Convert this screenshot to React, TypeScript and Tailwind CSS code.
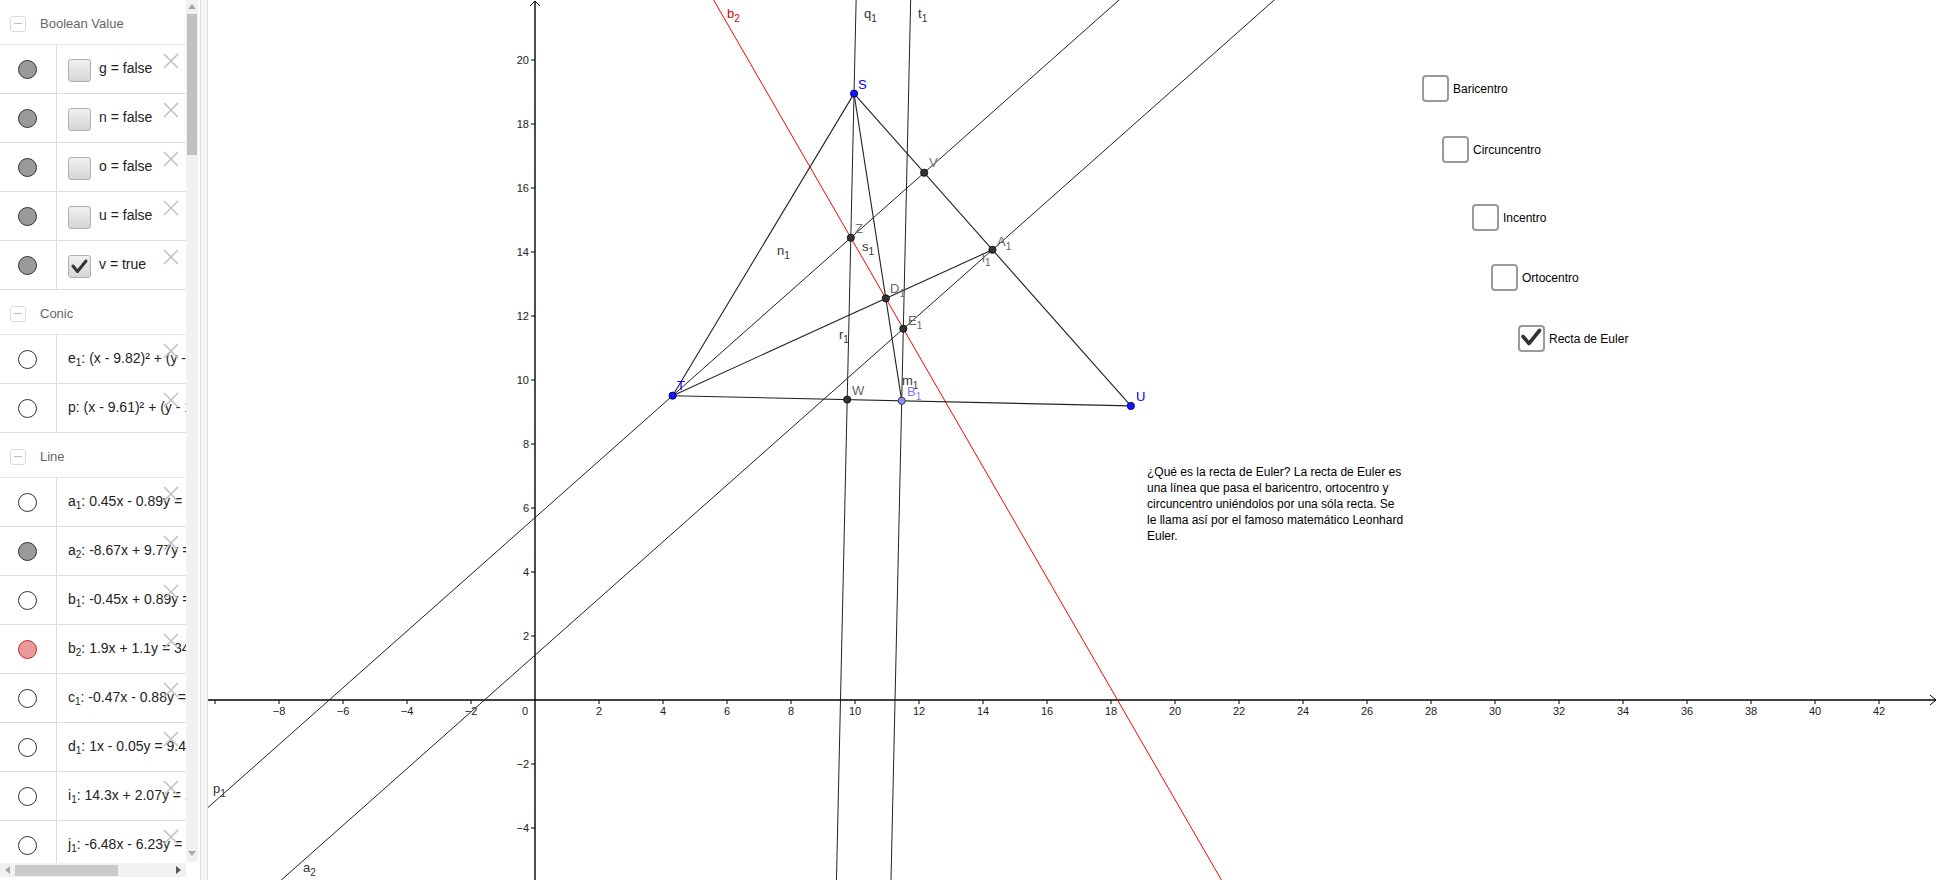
import React from 'react';

type P = [number, number];

// graphics view: origin in page pixels, 32px per unit
const OX = 535;
const OY = 700;
const K = 32;
const X = (x: number) => OX + K * x;
const Y = (y: number) => OY - K * y;

const S: P = [9.97, 18.95];
const T: P = [4.3, 9.51];
const U: P = [18.62, 9.19];

const mid = (a: P, b: P): P => [(a[0] + b[0]) / 2, (a[1] + b[1]) / 2];
const foot = (p: P, a: P, b: P): P => {
  const dx = b[0] - a[0];
  const dy = b[1] - a[1];
  const t = ((p[0] - a[0]) * dx + (p[1] - a[1]) * dy) / (dx * dx + dy * dy);
  return [a[0] + t * dx, a[1] + t * dy];
};
const circum = (a: P, b: P, c: P): P => {
  const d = 2 * (a[0] * (b[1] - c[1]) + b[0] * (c[1] - a[1]) + c[0] * (a[1] - b[1]));
  const a2 = a[0] ** 2 + a[1] ** 2;
  const b2 = b[0] ** 2 + b[1] ** 2;
  const c2 = c[0] ** 2 + c[1] ** 2;
  return [
    (a2 * (b[1] - c[1]) + b2 * (c[1] - a[1]) + c2 * (a[1] - b[1])) / d,
    (a2 * (c[0] - b[0]) + b2 * (a[0] - c[0]) + c2 * (b[0] - a[0])) / d,
  ];
};

const A1 = mid(S, U);
const B1 = mid(T, U);
const D1: P = [(S[0] + T[0] + U[0]) / 3, (S[1] + T[1] + U[1]) / 3];
const E1 = circum(S, T, U);
const Z: P = [S[0] + T[0] + U[0] - 2 * E1[0], S[1] + T[1] + U[1] - 2 * E1[1]];
const V = foot(T, S, U);
const W = foot(S, T, U);

function InfLine({ a, b, color = '#222' }: { a: P; b: P; color?: string }) {
  const x1 = X(a[0]);
  const y1 = Y(a[1]);
  const dx = X(b[0]) - x1;
  const dy = Y(b[1]) - y1;
  const len = Math.hypot(dx, dy);
  const ux = (dx / len) * 3000;
  const uy = (dy / len) * 3000;
  return <line x1={x1 - ux} y1={y1 - uy} x2={x1 + ux} y2={y1 + uy} stroke={color} strokeWidth={1} />;
}

function Seg({ a, b }: { a: P; b: P }) {
  return <line x1={X(a[0])} y1={Y(a[1])} x2={X(b[0])} y2={Y(b[1])} stroke="#222" strokeWidth={1.1} />;
}

function Dot({ p, fill = '#333', stroke = '#111' }: { p: P; fill?: string; stroke?: string }) {
  return <circle cx={X(p[0])} cy={Y(p[1])} r={3.6} fill={fill} stroke={stroke} strokeWidth={0.9} />;
}

function Lbl({ x, y, t, s, fill = '#333' }: { x: number; y: number; t: string; s?: string; fill?: string }) {
  return (
    <text x={x} y={y + 4.5} fontSize={13} fill={fill}>
      {t}
      {s && (
        <tspan fontSize={10} dy={4}>
          {s}
        </tspan>
      )}
    </text>
  );
}

const xTicks = [-10, -8, -6, -4, -2, 2, 4, 6, 8, 10, 12, 14, 16, 18, 20, 22, 24, 26, 28, 30, 32, 34, 36, 38, 40, 42];
const yTicks = [20, 18, 16, 14, 12, 10, 8, 6, 4, 2, -2, -4];
const fmt = (n: number) => (n < 0 ? `\u2212${-n}` : `${n}`);

function Graph() {
  return (
    <svg className="absolute inset-0" width={1730} height={880} viewBox="208 0 1730 880">
      {/* axes */}
      <line x1={208} y1={OY} x2={1936} y2={OY} stroke="#000" strokeWidth={1.4} />
      <polyline points="1930,695 1936,700 1930,705" fill="none" stroke="#000" strokeWidth={1} />
      <line x1={OX} y1={1} x2={OX} y2={880} stroke="#000" strokeWidth={1.4} />
      <polyline points="530,6 535,1 540,6" fill="none" stroke="#000" strokeWidth={1} />
      {xTicks.map((n) => (
        <g key={n}>
          <line x1={X(n)} y1={OY} x2={X(n)} y2={OY + 4} stroke="#000" strokeWidth={1} />
          {n > -10 && (
            <text x={X(n)} y={OY + 15} fontSize={11} fill="#222" textAnchor="middle">
              {fmt(n)}
            </text>
          )}
        </g>
      ))}
      <text x={525} y={OY + 15} fontSize={11} fill="#222" textAnchor="middle">
        0
      </text>
      {yTicks.map((n) => (
        <g key={n}>
          <line x1={OX - 4} y1={Y(n)} x2={OX} y2={Y(n)} stroke="#000" strokeWidth={1} />
          <text x={529} y={Y(n) + 4} fontSize={11} fill="#222" textAnchor="end">
            {fmt(n)}
          </text>
        </g>
      ))}

      {/* construction */}
      <InfLine a={T} b={V} />
      <InfLine a={A1} b={E1} />
      <InfLine a={S} b={W} />
      <InfLine a={B1} b={E1} />
      <InfLine a={Z} b={E1} color="#ff0000" />
      <Seg a={S} b={T} />
      <Seg a={S} b={U} />
      <Seg a={T} b={U} />
      <Seg a={S} b={B1} />
      <Seg a={T} b={A1} />

      {[V, Z, A1, D1, E1, W].map((p, i) => (
        <Dot key={i} p={p} />
      ))}
      <Dot p={S} fill="#1414ff" stroke="#000060" />
      <Dot p={T} fill="#1414ff" stroke="#000060" />
      <Dot p={U} fill="#1414ff" stroke="#000060" />
      <Dot p={B1} fill="#8c8cff" stroke="#333" />

      <Lbl x={727} y={13} t="b" s="2" fill="#e00000" />
      <Lbl x={864} y={13} t="q" s="1" />
      <Lbl x={918} y={13} t="t" s="1" />
      <Lbl x={858} y={84} t="S" fill="#0000ff" />
      <Lbl x={929} y={162} t="V" fill="#777" />
      <Lbl x={855} y={228} t="Z" fill="#777" />
      <Lbl x={862} y={246} t="s" s="1" />
      <Lbl x={777} y={250} t="n" s="1" />
      <Lbl x={997} y={241} t="A" s="1" fill="#666" />
      <Lbl x={982} y={257} t="l" s="1" fill="#666" />
      <Lbl x={890} y={288} t="D" s="1" fill="#666" />
      <Lbl x={908} y={320} t="E" s="1" fill="#666" />
      <Lbl x={839} y={334} t="r" s="1" />
      <Lbl x={902} y={380} t="m" s="1" />
      <Lbl x={852} y={390} t="W" fill="#666" />
      <Lbl x={907} y={391} t="B" s="1" fill="#7b7bff" />
      <Lbl x={677} y={385} t="T" fill="#0000ff" />
      <Lbl x={1136} y={396} t="U" fill="#0000ff" />
      <Lbl x={213} y={788} t="p" s="1" />
      <Lbl x={303} y={867} t="a" s="2" />
    </svg>
  );
}

function CanvasCheck({ left, top, label, checked }: { left: string; top: string; label: string; checked?: boolean }) {
  return (
    <div className={`absolute ${left} ${top} flex items-center gap-[4px]`}>
      <div className="w-[27px] h-[27px] rounded-[4px] border-2 border-[#9a9a9a] bg-white flex items-center justify-center">
        {checked && (
          <svg width="23" height="23" viewBox="0 0 23 23">
            <path d="M3 9.5 L9 16.5 L19.5 3.5" fill="none" stroke="#333" strokeWidth="3.6" strokeLinecap="round" strokeLinejoin="round" />
          </svg>
        )}
      </div>
      <span className="text-[12px] text-black">{label}</span>
    </div>
  );
}

function XIcon() {
  return (
    <svg className="absolute left-[163px] top-[8px]" width="16" height="16" viewBox="0 0 16 16">
      <path d="M1 1 L15 15 M15 1 L1 15" stroke="#c2c2c2" strokeWidth="1.6" />
    </svg>
  );
}

function Marble({ kind }: { kind: 'gray' | 'empty' | 'red' }) {
  const cls =
    kind === 'gray'
      ? 'bg-[#9a9a9a] border-[#333]'
      : kind === 'red'
        ? 'bg-[#e99a9a] border-[#cc2a2a]'
        : 'bg-white border-[#333]';
  return <div className={`w-[19px] h-[19px] rounded-full border ${cls}`} />;
}

function Header({ title }: { title: string }) {
  return (
    <div className="h-[45px] shrink-0 border-b border-[#e6e6e6] flex items-center pl-[10px] pt-[3px] gap-[14px]">
      <div className="w-[16px] h-[16px] rounded-[3px] border border-[#dcdcdc] flex items-center justify-center">
        <div className="w-[8px] h-[1.5px] bg-[#bdbdbd]" />
      </div>
      <span className="text-[13px] text-[#666]">{title}</span>
    </div>
  );
}

function Row({ kind, children }: { kind: 'gray' | 'empty' | 'red'; children: React.ReactNode }) {
  return (
    <div className="relative h-[49px] shrink-0 border-b border-[#dddddd] flex">
      <div className="w-[57px] shrink-0 border-r border-[#dddddd] flex items-center justify-center pr-[1px]">
        <Marble kind={kind} />
      </div>
      <div className="flex items-center pl-[11px] pb-[2px] whitespace-nowrap text-[14px] text-[#222]">{children}</div>
      <XIcon />
    </div>
  );
}

function Sub({ n }: { n: string }) {
  return <span className="text-[10px] relative top-[3px]">{n}</span>;
}

const bools: [string, boolean][] = [
  ['g', false],
  ['n', false],
  ['o', false],
  ['u', false],
  ['v', true],
];

const conics: [string, string, string][] = [
  ['e', '1', ': (x - 9.82)² + (y - 14.45)² = 20.46'],
  ['p', '', ': (x - 9.61)² + (y - 12.9)² = 38.2'],
];

const lines: ['gray' | 'empty' | 'red', string, string, string][] = [
  ['empty', 'a', '1', ': 0.45x - 0.89y = -4.27'],
  ['gray', 'a', '2', ': -8.67x + 9.77y = 13.97'],
  ['empty', 'b', '1', ': -0.45x + 0.89y = 5.08'],
  ['red', 'b', '2', ': 1.9x + 1.1y = 34.6'],
  ['empty', 'c', '1', ': -0.47x - 0.88y = -17.9'],
  ['empty', 'd', '1', ': 1x - 0.05y = 9.4'],
  ['empty', 'i', '1', ': 14.3x + 2.07y = 189'],
  ['empty', 'j', '1', ': -6.48x - 6.23y = -149'],
];

function Tri({ dir }: { dir: 'up' | 'down' | 'left' | 'right' }) {
  const pts = {
    up: '0,6 4,1 8,6',
    down: '0,1 4,6 8,1',
    left: '6,0 1,4 6,8',
    right: '1,0 6,4 1,8',
  }[dir];
  const fill = dir === 'right' ? '#555' : '#a8a8a8';
  return (
    <svg width="8" height="8" viewBox="0 0 8 8">
      <polygon points={pts} fill={fill} />
    </svg>
  );
}

function Sidebar() {
  return (
    <div className="w-[208px] shrink-0 h-full flex bg-white">
      <div className="w-[186px] shrink-0 flex flex-col">
        <div className="h-[863px] overflow-hidden flex flex-col">
          <Header title="Boolean Value" />
          {bools.map(([name, on]) => (
            <Row key={name} kind="gray">
              <div className="w-[23px] h-[23px] mr-[8px] mt-[5px] rounded-[3px] border border-[#b0b0b0] bg-gradient-to-b from-[#f0f0f0] to-[#d6d6d6] flex items-center justify-center">
                {on && (
                  <svg width="19" height="19" viewBox="0 0 19 19">
                    <path d="M3 9 L7.5 14.5 L16 4" fill="none" stroke="#333" strokeWidth="3" strokeLinecap="round" strokeLinejoin="round" />
                  </svg>
                )}
              </div>
              <span>
                {name} = {on ? 'true' : 'false'}
              </span>
            </Row>
          ))}
          <Header title="Conic" />
          {conics.map(([n, s, rest]) => (
            <Row key={n} kind="empty">
              <span>
                {n}
                {s && <Sub n={s} />}
                {rest}
              </span>
            </Row>
          ))}
          <Header title="Line" />
          {lines.map(([kind, n, s, rest]) => (
            <Row key={n + s} kind={kind}>
              <span>
                {n}
                <Sub n={s} />
                {rest}
              </span>
            </Row>
          ))}
        </div>
        <div className="h-[14px] shrink-0 bg-[#f1f1f1] flex items-center">
          <div className="w-[15px] flex justify-center">
            <Tri dir="left" />
          </div>
          <div className="w-[103px] h-[11px] bg-[#cacaca]" />
          <div className="flex-1" />
          <div className="w-[15px] flex justify-center">
            <Tri dir="right" />
          </div>
        </div>
      </div>
      <div className="w-[12px] shrink-0 flex flex-col">
        <div className="h-[862px] bg-[#f1f1f1] flex flex-col items-center">
          <div className="h-[14px] flex items-center">
            <Tri dir="up" />
          </div>
          <div className="w-[10px] h-[141px] bg-[#c1c1c1]" />
          <div className="flex-1" />
          <div className="h-[14px] flex items-center mb-[1px]">
            <Tri dir="down" />
          </div>
        </div>
      </div>
      <div className="w-[10px] shrink-0 h-full pl-[2px]">
        <div className="h-full border-x border-[#dedede] bg-[#f6f6f6]" />
      </div>
    </div>
  );
}

export default function App() {
  return (
    <div className="w-[1938px] h-[880px] flex overflow-hidden bg-white font-['Liberation_Sans',Arial,sans-serif]">
      <Sidebar />
      <div className="relative flex-1 h-full overflow-hidden bg-white">
        <Graph />
        <CanvasCheck left="left-[1214px]" top="top-[75px]" label="Baricentro" />
        <CanvasCheck left="left-[1234px]" top="top-[136px]" label="Circuncentro" />
        <CanvasCheck left="left-[1264px]" top="top-[204px]" label="Incentro" />
        <CanvasCheck left="left-[1283px]" top="top-[264px]" label="Ortocentro" />
        <CanvasCheck left="left-[1310px]" top="top-[325px]" label="Recta de Euler" checked />
        <div className="absolute left-[939px] top-[464px] text-[12px] leading-[16px] text-black whitespace-nowrap">
          <div>¿Qué es la recta de Euler? La recta de Euler es</div>
          <div>una línea que pasa el baricentro, ortocentro y</div>
          <div>circuncentro uniéndolos por una sóla recta. Se</div>
          <div>le llama así por el famoso matemático Leonhard</div>
          <div>Euler.</div>
        </div>
      </div>
    </div>
  );
}
